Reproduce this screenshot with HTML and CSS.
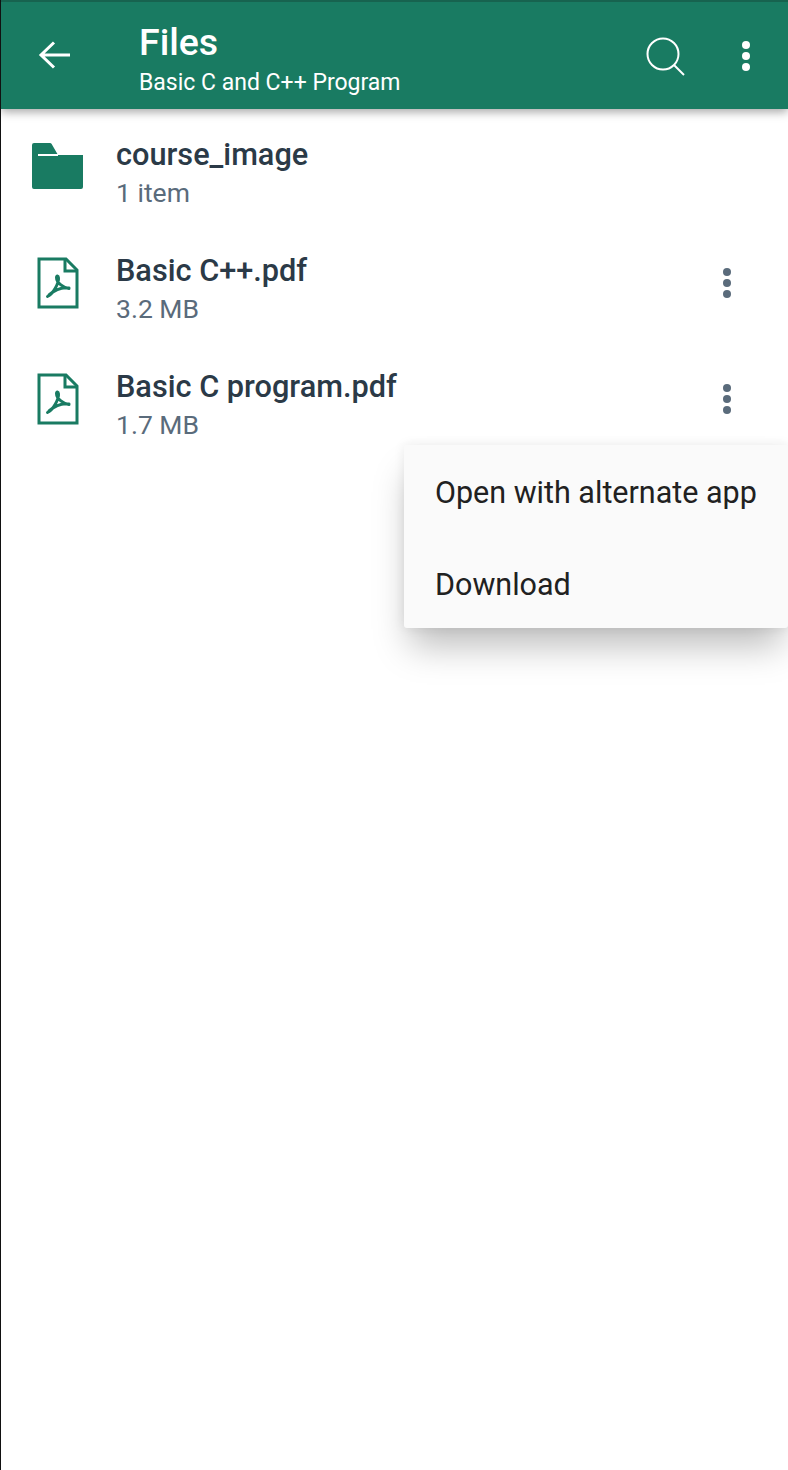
FILE: index.html
```html
<!DOCTYPE html>
<html lang="en">
<head>
    <meta charset="UTF-8">
    <meta name="viewport" content="width=device-width, initial-scale=1.0">
    <link rel="stylesheet" href="styles.css">
    <title>Files</title>
</head>
<body>
    <div class="pantalla">
        <header class="barra">
            <svg class="flecha" width="34" height="30" viewBox="0 0 34 30">
                <path d="M32 15H3M16 2.500 3 15l13 12.500" fill="none" stroke="#fff" stroke-width="3"/>
            </svg>
            <div class="titulos">
                <h1>Files</h1>
                <p>Basic C and C++ Program</p>
            </div>
            <svg class="lupa" width="40" height="40" viewBox="0 0 40 40">
                <circle cx="17" cy="17" r="15.500" fill="none" stroke="#fff" stroke-width="2"/>
                <path d="M28 28l10 10" fill="none" stroke="#fff" stroke-width="2"/>
            </svg>
            <div class="puntos puntos-blancos"><i></i><i></i><i></i></div>
        </header>

        <ul class="lista">
            <li class="fila">
                <svg class="icono icono-carpeta" width="51" height="46" viewBox="0 0 51 46">
                    <path d="M0 2a2 2 0 0 1 2-2h16a2 2 0 0 1 1.500.800L26 12h25v32a2 2 0 0 1-2 2H2a2 2 0 0 1-2-2z" fill="#197b62"/>
                    <path d="M6 12h20" stroke="#fff" stroke-width="2"/>
                </svg>
                <div class="datos">
                    <h2>course_image</h2>
                    <p>1 item</p>
                </div>
            </li>
            <li class="fila">
                <svg class="icono" width="42" height="52" viewBox="0 0 42 52">
                    <use href="#pdf"/>
                </svg>
                <div class="datos">
                    <h2>Basic C++.pdf</h2>
                    <p>3.2 MB</p>
                </div>
                <div class="puntos"><i></i><i></i><i></i></div>
            </li>
            <li class="fila">
                <svg class="icono" width="42" height="52" viewBox="0 0 42 52">
                    <use href="#pdf"/>
                </svg>
                <div class="datos">
                    <h2>Basic C program.pdf</h2>
                    <p>1.7 MB</p>
                </div>
                <div class="puntos"><i></i><i></i><i></i></div>
            </li>
        </ul>

        <div class="menu">
            <div class="opcion">Open with alternate app</div>
            <div class="opcion">Download</div>
        </div>
    </div>

    <svg class="defs" width="0" height="0">
        <defs>
            <g id="pdf" fill="none" stroke="#197b62">
                <path d="M2 2h27l11 11v37H2z" stroke-width="3"/>
                <path d="M28 2v12h12" stroke-width="3"/>
                <path d="M10.500 39.500C16 37 22 26 21.500 21c-.2-2.500-2-2.500-2-.5C19.500 26 27 31 32 31.500M32 31c-6-1-13 1-20 7" stroke-width="3" stroke-linecap="round"/>
            </g>
        </defs>
    </svg>
</body>
</html>
```

FILE: styles.css
```css
* {
    margin: 0;
    padding: 0;
    box-sizing: border-box;
}
body {
    background-color: #fff;
    font-family: Roboto, "Liberation Sans", sans-serif;
}
.pantalla {
    position: relative;
    width: 788px;
    height: 1470px;
    overflow: hidden;
    border-left: 1px solid #111;
}
.defs {position: absolute;}

/* barra superior */
.barra {
    display: flex;
    align-items: center;
    height: 109px;
    padding: 2px 38px 0 37px;
    background-color: #197b62;
    border-top: 2px solid #17634f;
    box-shadow: 0 3px 9px rgba(0, 0, 0, .35);
    color: #fff;
}
.flecha {
    flex-shrink: 0;
    margin-bottom: 3px;
}
.titulos {
    flex: 1;
    margin-left: 67px;
    padding-top: 6px;
}
.titulos h1 {
    font-size: 37.500px;
    font-weight: 500;
    line-height: 41px;
}
.titulos p {
    margin-top: 5px;
    font-size: 23px;
    line-height: 30px;
}
.lupa {margin-right: 56px;}

.puntos {
    display: flex;
    flex-direction: column;
    gap: 3px;
}
.puntos i {
    width: 8px;
    height: 8px;
    border-radius: 50%;
    background-color: #5a6b7b;
}
.puntos-blancos {margin-bottom: 2px;}
.puntos-blancos i {background-color: #fff;}

/* lista de archivos */
.lista {list-style: none;}
.fila {
    display: flex;
    align-items: center;
    height: 116px;
    padding-right: 57px;
}
.icono {
    flex-shrink: 0;
    margin-left: 36px;
}
.icono-carpeta {
    margin: 0 -4px 2px 31px;
}
.datos {
    flex: 1;
    margin-left: 37px;
    padding-top: 12px;
}
.datos h2 {
    font-size: 30.700px;
    font-weight: 500;
    line-height: 40px;
    color: #2b3a47;
}
.datos p {
    font-size: 26.500px;
    line-height: 36px;
    color: #5a6b7b;
}

/* menu emergente */
.menu {
    position: absolute;
    top: 445px;
    left: 403px;
    width: 384px;
    height: 183px;
    padding-top: 2px;
    background-color: #fafafa;
    border-radius: 3px;
    box-shadow: 0 24px 34px -6px rgba(0, 0, 0, .26), 0 0 12px rgba(0, 0, 0, .08);
}
.opcion {
    height: 91.500px;
    padding-left: 31px;
    font-size: 30.500px;
    line-height: 91.500px;
    color: #212121;
}
```
